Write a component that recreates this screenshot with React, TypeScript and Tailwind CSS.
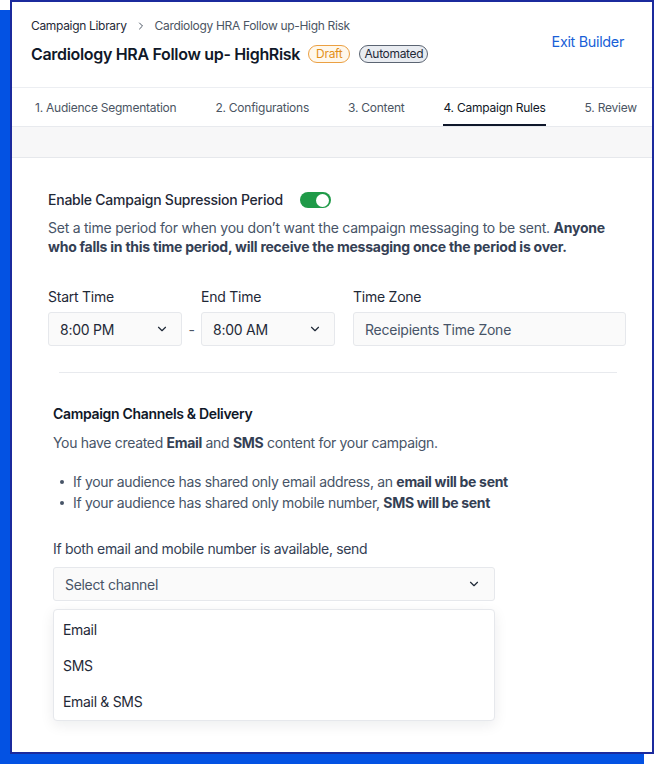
import { ChevronDown, ChevronRight } from "lucide-react";

const tabs = [
  "1. Audience Segmentation",
  "2. Configurations",
  "3. Content",
  "4. Campaign Rules",
  "5. Review",
];

function SelectBox({ value, className }: { value: string; className: string }) {
  return (
    <div
      className={`flex h-[34px] items-center justify-between rounded-[3px] border border-[#e6e8ec] bg-[#fafafa] pl-[11px] pr-[12px] text-[14px] ${className}`}
    >
      <span>{value}</span>
      <ChevronDown size={14} strokeWidth={2} className="text-[#1f2937]" />
    </div>
  );
}

export default function App() {
  return (
    <div className="h-[764px] w-[654px] overflow-hidden bg-white font-['Inter',sans-serif] tracking-[-0.015em] text-[#101828]">
      <div className="ml-[10px] h-[754px] w-[644px] overflow-hidden border-2 border-[#1b2a9d] bg-white shadow-[-10px_10px_0_0_#0352e3]">
        {/* header */}
        <div className="flex h-[86px] items-start justify-between border-b border-[#eceef2] pl-[19px] pr-[28px] pt-[14px] tracking-[-0.02em]">
          <div>
            <div className="flex items-center text-[12px] leading-[20px]">
              <span className="text-[#1f2937]">Campaign Library</span>
              <ChevronRight size={12} strokeWidth={2} className="mx-[8px] text-[#4b5563]" />
              <span className="text-[#4b5563]">Cardiology HRA Follow up-High Risk</span>
            </div>
            <div className="mt-[7px] flex items-center">
              <h1 className="text-[16px] font-semibold leading-[22px] text-[#101828]">
                Cardiology HRA Follow up- HighRisk
              </h1>
              <span className="ml-[8px] rounded-full border border-[#eba043] bg-[#fff8ec] px-[7px] text-[12px] leading-[16px] text-[#e2901b]">
                Draft
              </span>
              <span className="ml-[9px] rounded-full border border-[#5b6472] bg-[#e9ecf1] px-[4px] text-[12px] leading-[16px] text-[#1f2937]">
                Automated
              </span>
            </div>
          </div>
          <button className="mt-[16px] text-[14.4px] leading-[20px] text-[#1a5fd7]">Exit Builder</button>
        </div>

        {/* tabs */}
        <div className="flex h-[39px] items-stretch gap-[39px] whitespace-nowrap border-b border-[#e8eaee] pl-[23px] text-[12px] tracking-[-0.02em]">
          {tabs.map((t, i) => (
            <div
              key={t}
              className={`flex shrink-0 items-center border-b-2 pt-[4px] ${
                i === 3 ? "border-[#0f172a] text-[#111827]" : "border-transparent text-[#4b5563]"
              }`}
            >
              {t}
            </div>
          ))}
        </div>
        <div className="h-[31px] border-b border-[#e6e8ec] bg-[#f7f7f8]" />

        {/* suppression */}
        <div className="pl-[36px] pr-[26px] pt-[33px]">
          <div className="flex items-center">
            <span className="text-[14px] font-medium leading-[18px] text-[#1f2937]">
              Enable Campaign Supression Period
            </span>
            <div className="ml-[17px] flex h-[16px] w-[31px] items-center justify-end rounded-full bg-[#1f9a48] pr-[2px]">
              <div className="h-[13px] w-[13px] rounded-full bg-white" />
            </div>
          </div>
          <p className="mt-[9px] text-[14px] leading-[19px] text-[#475467]">
            Set a time period for when you don&rsquo;t want the campaign messaging to be sent.{" "}
            <span className="font-bold text-[#344054]">
              Anyone who falls in this time period, will receive the messaging once the period is over.
            </span>
          </p>

          <div className="mt-[32px] flex items-end">
            <div className="w-[134px]">
              <div className="text-[14px] leading-[18px] text-[#1f2937]">Start Time</div>
              <SelectBox value="8:00 PM" className="mt-[6px] text-[#1f2937]" />
            </div>
            <div className="flex h-[34px] w-[19px] items-center justify-center text-[14px] text-[#4b5563]">
              -
            </div>
            <div className="w-[134px]">
              <div className="text-[14px] leading-[18px] text-[#1f2937]">End Time</div>
              <SelectBox value="8:00 AM" className="mt-[6px] text-[#1f2937]" />
            </div>
            <div className="ml-[18px] flex-1">
              <div className="text-[14px] leading-[18px] text-[#1f2937]">Time Zone</div>
              <div className="mt-[6px] flex h-[34px] items-center rounded-[3px] border border-[#e6e8ec] bg-[#fafafa] pl-[11px] text-[14px] text-[#475467]">
                Receipients Time Zone
              </div>
            </div>
          </div>
        </div>

        <div className="ml-[47px] mr-[35px] mt-[26px] h-px bg-[#e8eaee]" />

        {/* channels */}
        <div className="pl-[41px] pt-[32px] tracking-[-0.02em]">
          <h2 className="text-[14px] font-semibold leading-[18px] text-[#101828]">
            Campaign Channels &amp; Delivery
          </h2>
          <p className="mt-[10px] text-[14px] leading-[20px] text-[#475467]">
            You have created <span className="font-bold text-[#344054]">Email</span> and{" "}
            <span className="font-bold text-[#344054]">SMS</span> content for your campaign.
          </p>
          <ul className="mt-[18px] text-[14px] leading-[21px] text-[#475467]">
            <li className="flex items-center">
              <span className="ml-[7px] mr-[9px] h-[4px] w-[4px] rounded-full bg-[#475467]" />
              <span>
                If your audience has shared only email address, an{" "}
                <span className="font-bold text-[#344054]">email will be sent</span>
              </span>
            </li>
            <li className="flex items-center">
              <span className="ml-[7px] mr-[9px] h-[4px] w-[4px] rounded-full bg-[#475467]" />
              <span>
                If your audience has shared only mobile number,{" "}
                <span className="font-bold text-[#344054]">SMS will be sent</span>
              </span>
            </li>
          </ul>
          <div className="mt-[27px] text-[14px] leading-[18px] text-[#344054]">
            If both email and mobile number is available, send
          </div>
          <div className="w-[442px]">
            <SelectBox value="Select channel" className="mt-[9px] pr-[13px] text-[#475467]" />
            <div className="mt-[8px] rounded-[4px] border border-[#e6e8ec] bg-white py-px text-[14px] text-[#1f2937] shadow-[0_4px_14px_rgba(16,24,40,0.08)]">
              {["Email", "SMS", "Email & SMS"].map((o) => (
                <div key={o} className="flex h-[36px] items-center pl-[9px]">
                  {o}
                </div>
              ))}
            </div>
          </div>
        </div>
      </div>
    </div>
  );
}
